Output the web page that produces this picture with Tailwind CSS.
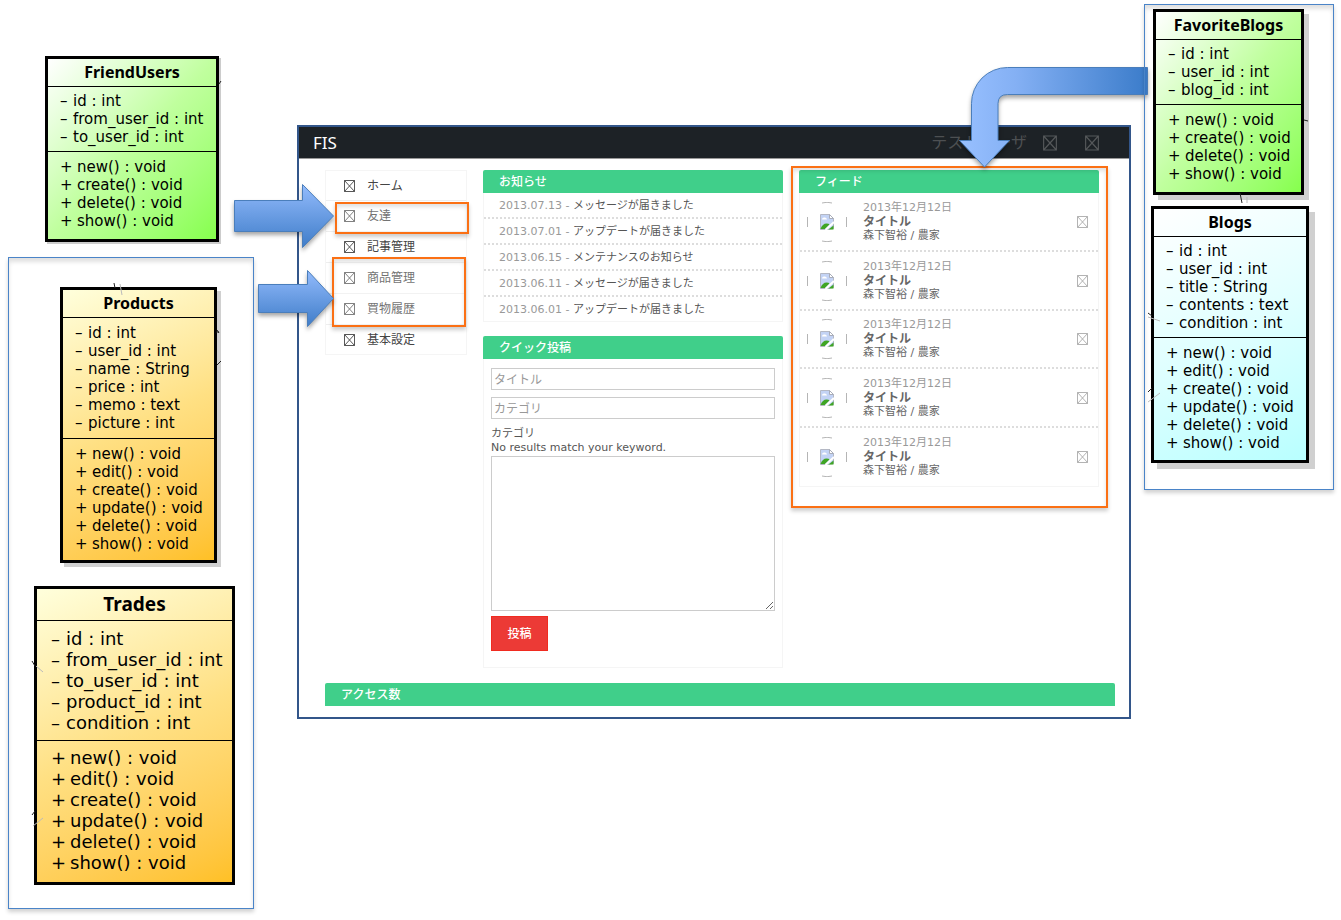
<!DOCTYPE html>
<html lang="ja">
<head>
<meta charset="utf-8">
<title>FIS – 画面とクラスの対応図</title>
<meta name="viewport" content="width=device-width, initial-scale=1">
<script src="https://cdn.jsdelivr.net/npm/@tailwindcss/browser@4"></script>
</head>
<body class="bg-white text-black font-['DejaVu_Sans','Noto_Sans_CJK_JP',sans-serif]">

<!-- Shared symbols -->
<svg class="hidden" aria-hidden="true">
  <symbol id="box-x" viewBox="0 0 11 12">
    <path d="M.5.5h10v11H.5zM.5.5l10 11M10.500 .5l-10 11" fill="none" stroke="currentColor" stroke-width=".9"/>
  </symbol>
  <symbol id="avatar" viewBox="0 0 40 40">
    <path d="M15 1q5-1.500 10 0M15 39q5 1.500 10 0M.500 15v10M39.500 15v10" fill="none" stroke="#b5b5b5" stroke-width="1"/>
    <path d="M13.500 12.500h9l4 4v10l-6 1h-7z" fill="#c3d3f5" stroke="#b4b8c4" stroke-width="1"/>
    <path d="M22.500 12.500v4h4z" fill="#fff" stroke="#a9adb9" stroke-width="1"/>
    <path d="M15 17.500q0-2 2-2 2.500-.5 3 2z" fill="#fff"/>
    <path d="M13.500 27q2-5.500 6-5.500 2.500 0 3 1l-4.500 4.500z" fill="#3fa524"/>
    <path d="M18.500 28l8.500-8" stroke="#fff" stroke-width="2"/>
    <path d="M21.500 27.500h5v-4z" fill="#3fa524"/>
  </symbol>
</svg>

<main class="relative min-h-screen min-w-[1341px] overflow-hidden">

  <!-- Application window -->
  <section class="absolute left-[297px] top-[125px] w-[834px] border-2 border-[#33568a] bg-white pb-[11px] text-[#555]">
    <header class="flex h-8 items-center border-b border-[#999] bg-[#1d2226] pl-3.5 pr-[30px]">
      <h1 class="font-['Noto_Sans',sans-serif] text-[17px] text-white">FIS</h1>
      <a href="#" class="ml-auto text-base text-[#4d5052]">テストユーザ</a>
      <a href="#" aria-label="通知" class="ml-4 text-[#55585a]"><svg class="h-4 w-3.5"><use href="#box-x"/></svg></a>
      <a href="#" aria-label="設定" class="ml-7 text-[#55585a]"><svg class="h-4 w-3.5"><use href="#box-x"/></svg></a>
    </header>

    <div class="ml-[26px] mr-3.5 mt-[11px]">
      <div class="mr-4 grid grid-cols-[142px_1fr_1fr] items-start gap-4">
        <nav class="border border-[#f5f5f5] text-xs text-[#444]">
          <ul class="divide-y divide-[#eee]">
            <li><a href="#" class="flex h-[29px] items-center gap-3 pl-[18px]"><svg class="h-3 w-[11px]"><use href="#box-x"/></svg>ホーム</a></li>
            <li><a href="#" class="flex h-[30px] items-center gap-3 pl-[18px]"><svg class="h-3 w-[11px]"><use href="#box-x"/></svg>友達</a></li>
            <li><a href="#" class="flex h-[30px] items-center gap-3 pl-[18px]"><svg class="h-3 w-[11px]"><use href="#box-x"/></svg>記事管理</a></li>
            <li><a href="#" class="flex h-[30px] items-center gap-3 pl-[18px]"><svg class="h-3 w-[11px]"><use href="#box-x"/></svg>商品管理</a></li>
            <li><a href="#" class="flex h-[30px] items-center gap-3 pl-[18px]"><svg class="h-3 w-[11px]"><use href="#box-x"/></svg>買物履歴</a></li>
            <li><a href="#" class="flex h-[29px] items-center gap-3 pl-[18px]"><svg class="h-3 w-[11px]"><use href="#box-x"/></svg>基本設定</a></li>
          </ul>
        </nav>

        <div class="flex flex-col gap-3.5">
          <section>
            <h2 class="h-[23px] rounded-t-xs bg-[#40cf8a] pl-4 text-xs leading-6 font-medium text-white">お知らせ</h2>
            <ul class="divide-y-2 divide-dotted divide-[#ddd] border border-t-0 border-[#f5f5f5] text-[11px] text-[#555]">
              <li class="pl-[15px] pt-px leading-[23px]"><time class="text-[#999]">2013.07.13 -</time> メッセージが届きました</li>
              <li class="pl-[15px] pt-px leading-[23px]"><time class="text-[#999]">2013.07.01 -</time> アップデートが届きました</li>
              <li class="pl-[15px] pt-px leading-[23px]"><time class="text-[#999]">2013.06.15 -</time> メンテナンスのお知らせ</li>
              <li class="pl-[15px] pt-px leading-[23px]"><time class="text-[#999]">2013.06.11 -</time> メッセージが届きました</li>
              <li class="pl-[15px] pt-px leading-[23px]"><time class="text-[#999]">2013.06.01 -</time> アップデートが届きました</li>
            </ul>
          </section>

          <section>
            <h2 class="h-[23px] rounded-t-xs bg-[#40cf8a] pl-4 text-xs leading-6 font-medium text-white">クイック投稿</h2>
            <form class="border border-t-0 border-[#f5f5f5] px-[7px] pb-4 pt-[9px] text-[11px] leading-[14px]">
              <input aria-label="タイトル" placeholder="タイトル" class="mb-[7px] block h-[22px] w-full border border-[#ccc] px-0.5 pt-0.5 text-xs placeholder:text-[#999]">
              <input aria-label="カテゴリ" placeholder="カテゴリ" class="mb-2 block h-[22px] w-full border border-[#ccc] px-0.5 pt-0.5 text-xs placeholder:text-[#999]">
              <label for="body" class="block">カテゴリ</label>
              <p>No results match your keyword.</p>
              <textarea id="body" class="mt-px block h-[155px] w-full resize border border-[#ccc]"></textarea>
              <button type="button" class="mt-[5px] h-[35px] w-[57px] border border-[#f02b20] bg-[#ec3a36] text-xs font-medium text-white">投稿</button>
            </form>
          </section>
        </div>

        <section>
          <h2 class="h-[23px] rounded-t-xs bg-[#40cf8a] pl-4 text-xs leading-6 font-medium text-white">フィード</h2>
          <ul class="divide-y-2 divide-dotted divide-[#ddd] border border-t-0 border-[#f5f5f5] text-[11px] leading-[14px] text-[#666]">
            <li class="flex h-[59px] items-center pl-[7px] pr-2.5"><svg class="size-10" role="img" aria-label="写真"><use href="#avatar"/></svg><div class="ml-4"><time class="block text-[#999]">2013年12月12日</time><h3 class="text-xs leading-[14px] font-bold">タイトル</h3><p>森下智裕 / 農家</p></div><a href="#" aria-label="開く" class="ml-auto text-[#aaa]"><svg class="h-3 w-[11px]"><use href="#box-x"/></svg></a></li>
            <li class="flex h-[59px] items-center pl-[7px] pr-2.5"><svg class="size-10" role="img" aria-label="写真"><use href="#avatar"/></svg><div class="ml-4"><time class="block text-[#999]">2013年12月12日</time><h3 class="text-xs leading-[14px] font-bold">タイトル</h3><p>森下智裕 / 農家</p></div><a href="#" aria-label="開く" class="ml-auto text-[#aaa]"><svg class="h-3 w-[11px]"><use href="#box-x"/></svg></a></li>
            <li class="flex h-[58px] items-center pl-[7px] pr-2.5"><svg class="size-10" role="img" aria-label="写真"><use href="#avatar"/></svg><div class="ml-4"><time class="block text-[#999]">2013年12月12日</time><h3 class="text-xs leading-[14px] font-bold">タイトル</h3><p>森下智裕 / 農家</p></div><a href="#" aria-label="開く" class="ml-auto text-[#aaa]"><svg class="h-3 w-[11px]"><use href="#box-x"/></svg></a></li>
            <li class="flex h-[59px] items-center pl-[7px] pr-2.5"><svg class="size-10" role="img" aria-label="写真"><use href="#avatar"/></svg><div class="ml-4"><time class="block text-[#999]">2013年12月12日</time><h3 class="text-xs leading-[14px] font-bold">タイトル</h3><p>森下智裕 / 農家</p></div><a href="#" aria-label="開く" class="ml-auto text-[#aaa]"><svg class="h-3 w-[11px]"><use href="#box-x"/></svg></a></li>
            <li class="flex h-[58px] items-center pl-[7px] pr-2.5"><svg class="size-10" role="img" aria-label="写真"><use href="#avatar"/></svg><div class="ml-4"><time class="block text-[#999]">2013年12月12日</time><h3 class="text-xs leading-[14px] font-bold">タイトル</h3><p>森下智裕 / 農家</p></div><a href="#" aria-label="開く" class="ml-auto text-[#aaa]"><svg class="h-3 w-[11px]"><use href="#box-x"/></svg></a></li>
          </ul>
        </section>
      </div>
      <h2 class="mt-[15px] h-[23px] rounded-t-xs bg-[#40cf8a] pl-4 text-xs leading-6 font-medium text-white">アクセス数</h2>
    </div>
  </section>

  <!-- Highlight frames -->
  <div class="absolute left-[335px] top-[202px] h-8 w-[134px] border-2 border-[#fb7014] bg-white/25 shadow-[0_3px_4px_rgba(0,0,0,0.2),inset_0_3px_4px_rgba(0,0,0,0.12)]"></div>
  <div class="absolute left-[332px] top-[257px] h-[70px] w-[134px] border-2 border-[#fb7014] bg-white/25 shadow-[0_3px_4px_rgba(0,0,0,0.2),inset_0_3px_4px_rgba(0,0,0,0.12)]"></div>
  <div class="absolute left-[791px] top-[166px] h-[342px] w-[317px] border-2 border-[#fb7014] shadow-[0_3px_4px_rgba(0,0,0,0.2),inset_0_3px_4px_rgba(0,0,0,0.12)]"></div>

  <!-- Arrows -->
  <svg class="pointer-events-none absolute left-0 top-0 drop-shadow-[0_3px_2px_rgba(0,0,0,0.35)]" width="1341" height="400" aria-hidden="true">
    <defs>
      <linearGradient id="down" x1="0" y1="0" x2="0" y2="1"><stop offset="0" stop-color="#93bbfc"/><stop offset="1" stop-color="#3f7dc9"/></linearGradient>
      <linearGradient id="across" x1="0" y1="0" x2="1" y2="0"><stop offset="0" stop-color="#98c0ff"/><stop offset=".3" stop-color="#84b0f4"/><stop offset="1" stop-color="#3b7cca"/></linearGradient>
    </defs>
    <path d="M234.500 200.500H302.500V184.500L333.500 216L302.500 247.500V231.500H234.500Z" fill="url(#down)" stroke="#4a7ebb"/>
    <path d="M258.500 284.500H307.500V270.500L333.500 298.500L307.500 326.500V312.500H258.500Z" fill="url(#down)" stroke="#4a7ebb"/>
    <path d="M1147.500 67.500H1007.500A36 36 0 0 0 971.500 103.500V140.500H959.500L984.500 167L1009.500 140.500H998V103.500Q998 94.500 1007.500 94.500H1147.500Z" fill="url(#across)" stroke="#4a7ebb"/>
  </svg>

  <!-- Group frames -->
  <div class="absolute left-2 top-[257px] h-[652px] w-[246px] border border-[#4a84c8] shadow-[0_3px_4px_rgba(0,0,0,0.18),inset_0_4px_4px_rgba(0,0,0,0.12)]"></div>
  <div class="absolute left-[1144px] top-1 h-[486px] w-[190px] border border-[#4a84c8] shadow-[0_3px_4px_rgba(0,0,0,0.18),inset_0_4px_4px_rgba(0,0,0,0.12)]"></div>

  <!-- Class nodes -->
  <article class="absolute left-[45px] top-14 w-[174px] border-3 border-black bg-linear-to-br from-white via-[#c0ff9e] to-[#86ff4c] pb-[9px] text-[15px] leading-[18px] shadow-[2px_2px_0_#ccc]">
    <h2 class="h-[27px] text-center font-['Noto_Sans',sans-serif] text-base leading-[27px] font-bold">FriendUsers</h2>
    <ul class="border-t border-black py-[5px] pl-3 [&_span]:inline-block [&_span]:w-[13px]">
      <li><span>–</span>id : int</li><li><span>–</span>from_user_id : int</li><li><span>–</span>to_user_id : int</li>
    </ul>
    <ul class="border-t border-black pl-3 pt-[6px] [&_span]:inline-block [&_span]:w-[17px]">
      <li><span>+</span>new() : void</li><li><span>+</span>create() : void</li><li><span>+</span>delete() : void</li><li><span>+</span>show() : void</li>
    </ul>
  </article>

  <article class="absolute left-[60px] top-[287px] w-[157px] border-3 border-black bg-linear-155 from-[#ffffdc] via-[#ffe083] to-[#ffc024] pb-[7px] text-[15px] leading-[18px] shadow-[4px_4px_0_#d0d0d0]">
    <h2 class="h-[27px] text-center font-['Noto_Sans',sans-serif] text-base leading-[27px] font-bold">Products</h2>
    <ul class="border-t border-black py-[6px] pl-3 [&_span]:inline-block [&_span]:w-[13px]">
      <li><span>–</span>id : int</li><li><span>–</span>user_id : int</li><li><span>–</span>name : String</li><li><span>–</span>price : int</li><li><span>–</span>memo : text</li><li><span>–</span>picture : int</li>
    </ul>
    <ul class="border-t border-black pl-3 pt-[6px] [&_span]:inline-block [&_span]:w-[17px]">
      <li><span>+</span>new() : void</li><li><span>+</span>edit() : void</li><li><span>+</span>create() : void</li><li><span>+</span>update() : void</li><li><span>+</span>delete() : void</li><li><span>+</span>show() : void</li>
    </ul>
  </article>

  <article class="absolute left-[34px] top-[586px] w-[201px] border-3 border-black bg-linear-155 from-[#ffffdc] via-[#ffe083] to-[#ffc024] pb-[9px] text-lg leading-[21px]">
    <h2 class="h-[31px] text-center font-['Noto_Sans',sans-serif] text-[19px] leading-[31px] font-bold">Trades</h2>
    <ul class="border-t border-black py-[7px] pl-3.5 [&_span]:inline-block [&_span]:w-[15px]">
      <li><span>–</span>id : int</li><li><span>–</span>from_user_id : int</li><li><span>–</span>to_user_id : int</li><li><span>–</span>product_id : int</li><li><span>–</span>condition : int</li>
    </ul>
    <ul class="border-t border-black pl-3.5 pt-[6px] [&_span]:inline-block [&_span]:w-[19px]">
      <li><span>+</span>new() : void</li><li><span>+</span>edit() : void</li><li><span>+</span>create() : void</li><li><span>+</span>update() : void</li><li><span>+</span>delete() : void</li><li><span>+</span>show() : void</li>
    </ul>
  </article>

  <article class="absolute left-[1153px] top-[9px] w-[151px] border-3 border-black bg-linear-to-br from-white via-[#c0ff9e] to-[#86ff4c] pb-[9px] text-[15px] leading-[18px] shadow-[5px_5px_0_#d0d0d0]">
    <h2 class="h-[27px] text-center font-['Noto_Sans',sans-serif] text-base leading-[27px] font-bold">FavoriteBlogs</h2>
    <ul class="border-t border-black py-[5px] pl-3 [&_span]:inline-block [&_span]:w-[13px]">
      <li><span>–</span>id : int</li><li><span>–</span>user_id : int</li><li><span>–</span>blog_id : int</li>
    </ul>
    <ul class="border-t border-black pl-3 pt-[6px] [&_span]:inline-block [&_span]:w-[17px]">
      <li><span>+</span>new() : void</li><li><span>+</span>create() : void</li><li><span>+</span>delete() : void</li><li><span>+</span>show() : void</li>
    </ul>
  </article>

  <article class="absolute left-[1151px] top-[206px] w-[158px] border-3 border-black bg-linear-155 from-white via-[#e0ffff] to-[#b8ffff] pb-[8px] text-[15px] leading-[18px] shadow-[6px_6px_0_#d0d0d0]">
    <h2 class="h-[27px] text-center font-['Noto_Sans',sans-serif] text-base leading-[27px] font-bold">Blogs</h2>
    <ul class="border-t border-black py-[5px] pl-3 [&_span]:inline-block [&_span]:w-[13px]">
      <li><span>–</span>id : int</li><li><span>–</span>user_id : int</li><li><span>–</span>title : String</li><li><span>–</span>contents : text</li><li><span>–</span>condition : int</li>
    </ul>
    <ul class="border-t border-black pl-3 pt-[6px] [&_span]:inline-block [&_span]:w-[17px]">
      <li><span>+</span>new() : void</li><li><span>+</span>edit() : void</li><li><span>+</span>create() : void</li><li><span>+</span>update() : void</li><li><span>+</span>delete() : void</li><li><span>+</span>show() : void</li>
    </ul>
  </article>

  <!-- Relation line stubs -->
  <svg class="pointer-events-none absolute left-0 top-0" width="1341" height="920" fill="none" stroke="#222" aria-hidden="true">
    <path d="M219 84l2-3M114 283l1 5M216 332h3M217 330l2 3M217 365l4-4M32 661l3 5M32 815l3-4M1304 120l4 1M1240 193l2 10M1148 313l4 3M1148 392l4-4"/>
    <path d="M120 284l2 11M36 666l7 6M33 826l10-8M1247 197v6M1148 317l12 4M1148 402l12-9" stroke="#bbb"/>
  </svg>
</main>
</body>
</html>
